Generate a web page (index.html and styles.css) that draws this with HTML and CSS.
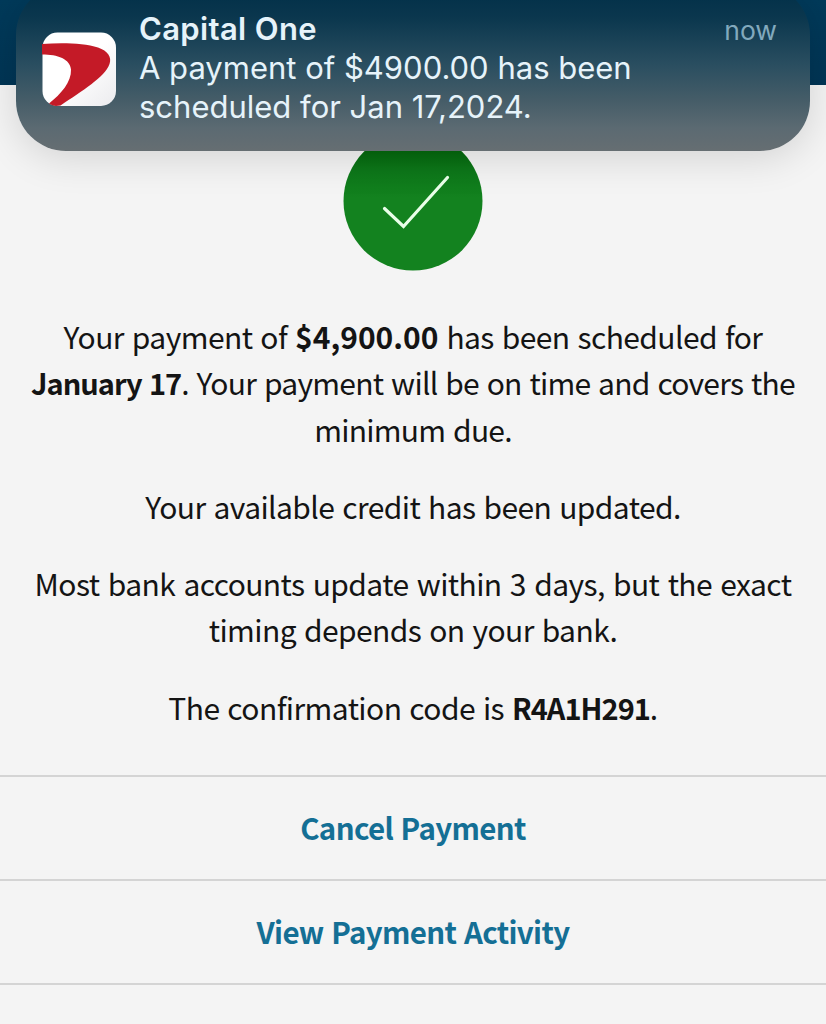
FILE: index.html
```html
<!DOCTYPE html>
<html lang="en">
<head>
    <meta charset="UTF-8">
    <meta name="viewport" content="width=device-width, initial-scale=1.0">
    <title>Payment Scheduled</title>
    <link rel="stylesheet" href="styles.css">
</head>
<body>
    <header class="top-bar"></header>

    <div class="notification">
        <svg class="app-icon" viewBox="0 0 74 74">
            <defs>
                <linearGradient id="iconBg" x1="0" y1="0" x2="1" y2="1">
                    <stop offset="0.5" stop-color="#ffffff"/>
                    <stop offset="1" stop-color="#ebebee"/>
                </linearGradient>
            </defs>
            <rect x="0.500" y="0.500" width="73.500" height="73.500" rx="15" fill="url(#iconBg)"/>
            <path d="M0 12 C20 10.500 42 11 56 15.500 C66 19 70 25 67.500 32 C63 45 40 59 18.500 73.500 L14 74 Q10 73.500 7 71.500 C19 62 29.500 50 29 37.500 C28 27 16 22.500 0 22.500 Z" fill="#c41a27"/>
        </svg>
        <div class="notification-body">
            <div class="notification-head">
                <span class="app-name">Capital One</span>
                <span class="time">now</span>
            </div>
            <p class="message">A payment of $4900.00 has been<br>scheduled for Jan 17,2024.</p>
        </div>
    </div>

    <main class="content">
        <svg class="success-icon" viewBox="0 0 140 140">
            <defs>
                <linearGradient id="circleBg" x1="0" y1="0" x2="0" y2="1">
                    <stop offset="0.130" stop-color="#04660d"/>
                    <stop offset="0.280" stop-color="#0d7719"/>
                    <stop offset="0.480" stop-color="#13821f"/>
                </linearGradient>
            </defs>
            <circle cx="70" cy="70" r="69.500" fill="url(#circleBg)"/>
            <path d="M41.500 77.500 L60.500 95.500 L104.500 46.500" fill="none" stroke="#e9ffe9" stroke-width="3.200" stroke-linecap="round"/>
        </svg>

        <div class="details">
            <p>Your payment of <strong>$4,900.00</strong> has been scheduled for<br><strong class="tight">January 17</strong><span class="snug">. Your payment will be on time and covers the<br>minimum due.</span></p>
            <p>Your available credit has been updated.</p>
            <p><span class="loose">Most bank accounts update within 3 days, but the exact</span><br>timing depends on your bank.</p>
            <p>The confirmation code is <strong class="tight">R4A1H291</strong>.</p>
        </div>
    </main>

    <nav class="actions">
        <a class="action">Cancel Payment</a>
        <a class="action">View Payment Activity</a>
    </nav>
</body>
</html>
```
FILE: styles.css
```css
* {
    box-sizing: border-box;
}

body {
    margin: 0;
    height: 1024px;
    overflow: hidden;
    background: #f4f4f4;
    color: #141414;
    font-family: "Noto Sans CJK SC", "Noto Sans", sans-serif;
}

.top-bar {
    height: 85px;
    background: linear-gradient(#003a5a, #003555);
}

/* banner sits over the page, top edge just off screen */
.notification {
    position: absolute;
    top: -15px;
    left: 16px;
    width: 794px;
    height: 166px;
    padding: 24px 33px 0 26px;
    display: flex;
    gap: 23px;
    border-radius: 50px;
    background: linear-gradient(#04324a 8%, #0b374e 20%, #2a4e60 48%, #465d68 70%, #5b6a72 86%, #666e72);
    box-shadow: 0 6px 40px rgba(0, 0, 0, 0.14);
    color: #e6f3fa;
    font-family: Inter, "Liberation Sans", sans-serif;
}

.app-icon {
    flex: none;
    width: 74px;
    height: 74px;
    margin-top: 23px;
}

.notification-body {
    flex: 1;
}

.notification-head {
    display: flex;
    justify-content: space-between;
    height: 39px;
    line-height: 39px;
}

.app-name {
    font-size: 31px;
    font-weight: 600;
    letter-spacing: 0.35px;
}

.time {
    padding-top: 2px;
    font-size: 26.5px;
    color: #82a9bd;
}

.message {
    margin: 0;
    font-size: 31px;
    line-height: 39px;
    white-space: nowrap;
}

.content {
    padding-top: 46px;
}

.success-icon {
    display: block;
    width: 140px;
    height: 140px;
    margin: 0 auto;
}

.details {
    padding-top: 42px;
    font-size: 30px;
    line-height: 46.3px;
    letter-spacing: -0.58px;
    word-spacing: 1.8px;
    text-align: center;
    white-space: nowrap;
}

.details p {
    margin: 0 0 31px;
}

.details strong {
    letter-spacing: 0;
}

.details .tight {
    font-size: 29px;
    letter-spacing: -1px;
}

.snug {
    letter-spacing: -0.75px;
}

.loose {
    letter-spacing: -0.6px;
    word-spacing: 2.2px;
}

.actions {
    margin-top: 44.7px;
    border-top: 2px solid #d4d4d4;
}

.action {
    display: flex;
    align-items: center;
    justify-content: center;
    height: 104px;
    padding-bottom: 2px;
    border-bottom: 2px solid #d4d4d4;
    color: #146f95;
    font-size: 29.5px;
    font-weight: 700;
    letter-spacing: -0.65px;
    word-spacing: 1.5px;
}
```
